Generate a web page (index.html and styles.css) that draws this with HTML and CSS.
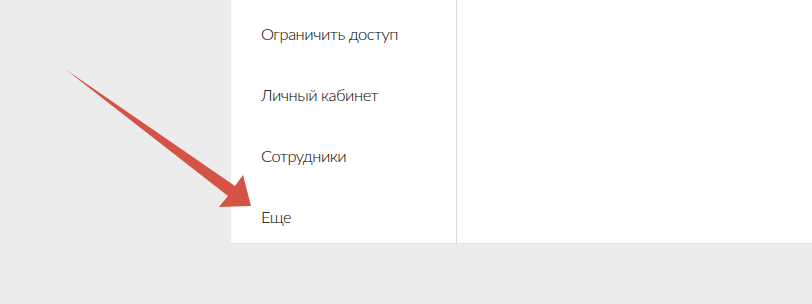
FILE: index.html
```html
<!DOCTYPE html>
<html lang="ru">
<head>
  <meta charset="UTF-8">
  <meta name="viewport" content="width=device-width, initial-scale=1.0">
  <title>Меню</title>
  <link rel="stylesheet" href="styles.css">
</head>
<body>
  <div class="panel">
    <ul class="menu">
      <li class="menu-item">Ограничить доступ</li>
      <li class="menu-item">Личный кабинет</li>
      <li class="menu-item">Сотрудники</li>
      <li class="menu-item">Еще</li>
    </ul>
    <div class="content"></div>
  </div>
  <svg class="arrow" width="812" height="304" viewBox="0 0 812 304">
    <polygon points="65,69 235,186 243,175 251,206 219,207 228,196" fill="#d35446"/>
  </svg>
</body>
</html>
```

FILE: styles.css
```css
body {
  margin: 0;
  background-color: #ececec;
  font-family: Lato, "Noto Sans", sans-serif;
  color: #000;
}

.panel {
  display: flex;
  margin-left: 231px;
  height: 243px;
  background: #fff;
  border-bottom: 1px solid #e2e2e2;
  overflow: hidden;
}

.menu {
  list-style: none;
  margin: 0;
  padding: 3px 0 0;
  width: 225px;
  border-right: 1px solid #dcdcdc;
}

.menu-item {
  display: flex;
  align-items: center;
  height: 61px;
  padding-left: 30px;
  font-size: 16.5px;
  font-weight: 300;
  letter-spacing: -0.5px;
}

.content {
  flex: 1;
}

.arrow {
  position: absolute;
  left: 0;
  top: 0;
  pointer-events: none;
}
```
